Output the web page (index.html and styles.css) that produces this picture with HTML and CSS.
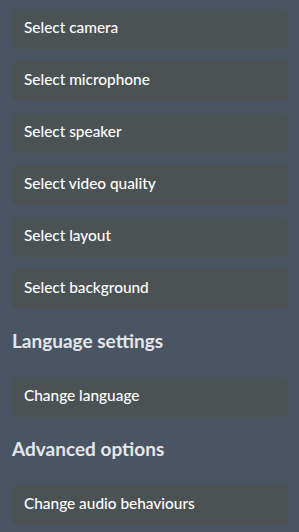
FILE: index.html
```html
<!DOCTYPE html>
<html lang="en">

<head>
    <meta charset="UTF-8">
    <meta name="viewport" content="width=device-width, initial-scale=1.0">
    <title>Settings</title>
    <link rel="stylesheet" href="styles.css">
</head>

<body>
    <div class="settings">
        <div class="group">
            <button class="option">Select camera</button>
            <button class="option">Select microphone</button>
            <button class="option">Select speaker</button>
            <button class="option">Select video quality</button>
            <button class="option">Select layout</button>
            <button class="option">Select background</button>
        </div>

        <h3 class="heading">Language settings</h3>
        <div class="group">
            <button class="option">Change language</button>
        </div>

        <h3 class="heading">Advanced options</h3>
        <div class="group">
            <button class="option">Change audio behaviours</button>
        </div>
    </div>
</body>

</html>
```

FILE: styles.css
```css
body,
html {
    margin: 0;
    height: 100%;
    background-color: #4a5563;
}

.settings {
    padding: 9px 11px 0 12px;
    font-family: Lato, "Open Sans", sans-serif;
}

.group {
    display: flex;
    flex-direction: column;
    gap: 12px;
}

.option {
    height: 40px;
    padding: 0 12px 4px;
    border: none;
    border-radius: 6px;
    background-color: #4b5254;
    color: #fff;
    font-family: inherit;
    font-size: 15.4px;
    font-weight: 500;
    text-align: left;
    cursor: pointer;
}

.heading {
    margin: 0;
    padding: 20px 0 24px;
    color: #e4e6ea;
    font-size: 19px;
    font-weight: 700;
    line-height: 24px;
}
```
